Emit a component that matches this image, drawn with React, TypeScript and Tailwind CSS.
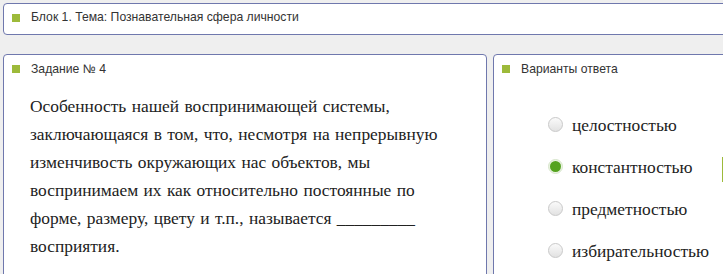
const options = [
    { label: "целостностью", checked: false },
    { label: "константностью", checked: true },
    { label: "предметностью", checked: false },
    { label: "избирательностью", checked: false },
];

const Marker = () => <span className="inline-block w-[8px] h-[8px] bg-[#9dba3a] shrink-0" />;

const Radio = ({ checked }: { checked: boolean }) => (
    <span
        className={
            checked
                ? "w-[15px] h-[15px] rounded-full border border-[#d8e6cc] bg-[#eaf3e2] flex items-center justify-center shrink-0"
                : "w-[15px] h-[15px] rounded-full border border-[#c9c9c9] bg-gradient-to-b from-[#fafafa] to-[#e2e2e2] shrink-0"
        }
    >
        {checked && <span className="w-[11px] h-[11px] rounded-full bg-[#54a21f]" />}
    </span>
);

export default function App() {
    return (
        <div className="w-[723px] h-[274px] overflow-hidden bg-[#efefef] pt-[3px] pl-[3px] [font-family:'Liberation_Sans',Arial,sans-serif]">
            {/* Block title */}
            <div className="w-[760px] h-[32px] rounded-[4px] border border-[#6f78ad] bg-white flex items-center gap-[11px] pl-[8px] pb-[3px]">
                <Marker />
                <span className="text-[12.2px] text-[#333]">Блок 1. Тема: Познавательная сфера личности</span>
            </div>

            <div className="flex gap-[6px] mt-[19px]">
                {/* Question */}
                <div className="w-[484px] h-[260px] shrink-0 rounded-[4px] border border-[#6f78ad] bg-white">
                    <div className="flex items-center gap-[11px] pl-[8px] pt-[5px]">
                        <Marker />
                        <span className="text-[12.2px] text-[#333]">Задание № 4</span>
                    </div>
                    <p className="pl-[26px] pr-[22px] pt-[14px] text-[17.4px] leading-[28px] [word-spacing:1px] text-[#222] [font-family:'Liberation_Serif','Times_New_Roman',serif]">
                        Особенность нашей воспринимающей системы, заключающаяся в том, что, несмотря на непрерывную
                        изменчивость окружающих нас объектов, мы воспринимаем их как относительно постоянные по
                        форме, размеру, цвету и т.п., называется _________ восприятия.
                    </p>
                </div>

                {/* Answers */}
                <div className="w-[300px] h-[260px] shrink-0 rounded-[4px] border border-[#6f78ad] bg-white">
                    <div className="flex items-center gap-[11px] pl-[8px] pt-[5px]">
                        <Marker />
                        <span className="text-[12.2px] text-[#333]">Варианты ответа</span>
                    </div>
                    <div className="relative flex flex-col gap-[21px] pl-[54px] pt-[36px]">
                        {options.map((o) => (
                            <label key={o.label} className="flex items-center gap-[9px] h-[21px]">
                                <Radio checked={o.checked} />
                                <span className="text-[17.4px] text-[#222] [font-family:'Liberation_Serif','Times_New_Roman',serif]">
                                    {o.label}
                                </span>
                            </label>
                        ))}
                        <span className="absolute left-[228px] top-[79px] w-[4px] h-[25px] bg-[#9dba3a]" />
                    </div>
                </div>
            </div>
        </div>
    );
}
